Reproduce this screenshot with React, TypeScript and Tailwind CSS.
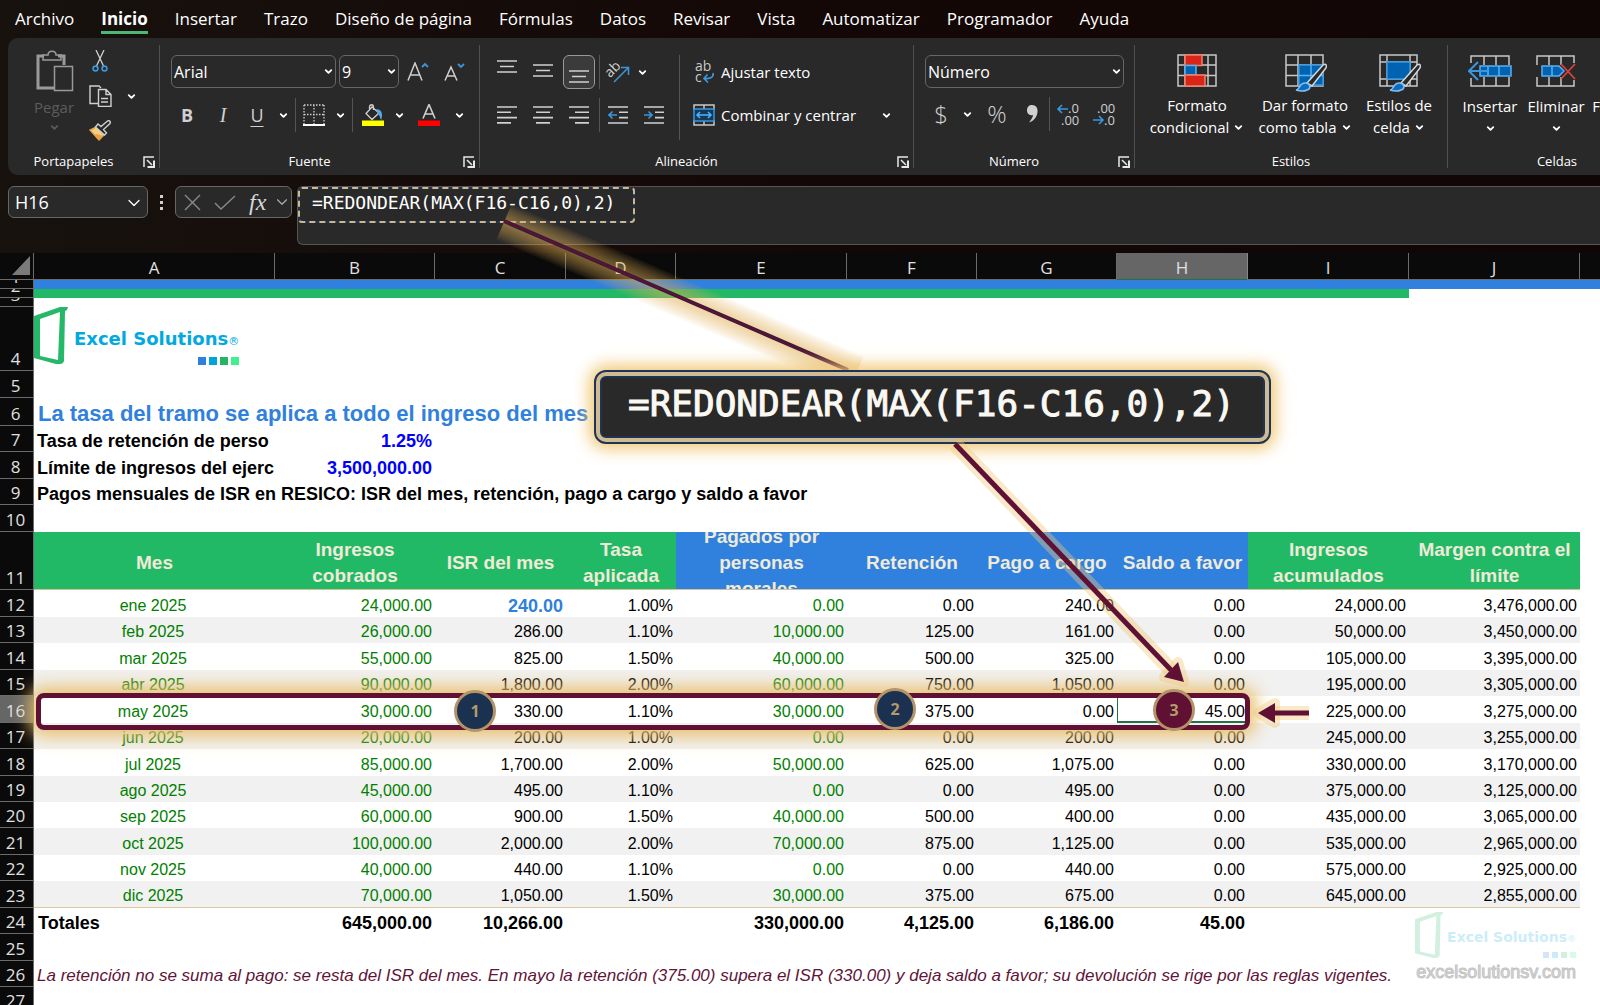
import type { ReactNode } from 'react';
import { ChevronDown } from 'lucide-react';
import clsx from 'clsx';

const tabs = [
  'Archivo',
  'Inicio',
  'Insertar',
  'Trazo',
  'Diseño de página',
  'Fórmulas',
  'Datos',
  'Revisar',
  'Vista',
  'Automatizar',
  'Programador',
  'Ayuda',
];

const columns = [
  { letter: 'A', width: 'w-[241px]' },
  { letter: 'B', width: 'w-[160px]' },
  { letter: 'C', width: 'w-[131px]' },
  { letter: 'D', width: 'w-[110px]' },
  { letter: 'E', width: 'w-[171px]' },
  { letter: 'F', width: 'w-[130px]' },
  { letter: 'G', width: 'w-[140px]' },
  { letter: 'H', width: 'w-[131px]' },
  { letter: 'I', width: 'w-[161px]' },
  { letter: 'J', width: 'w-[171px]' },
];

const headings = [
  { text: 'Mes', blue: false },
  { text: 'Ingresos cobrados', blue: false },
  { text: 'ISR del mes', blue: false },
  { text: 'Tasa aplicada', blue: false },
  { text: 'Pagados por personas morales', blue: true },
  { text: 'Retención', blue: true },
  { text: 'Pago a cargo', blue: true },
  { text: 'Saldo a favor', blue: true },
  { text: 'Ingresos acumulados', blue: false },
  { text: 'Margen contra el límite', blue: false },
];

const months = [
  { n: 12, h: 'h-[27px]', cells: ['ene 2025', '24,000.00', '240.00', '1.00%', '0.00', '0.00', '240.00', '0.00', '24,000.00', '3,476,000.00'] },
  { n: 13, h: 'h-[26px]', cells: ['feb 2025', '26,000.00', '286.00', '1.10%', '10,000.00', '125.00', '161.00', '0.00', '50,000.00', '3,450,000.00'] },
  { n: 14, h: 'h-[27px]', cells: ['mar 2025', '55,000.00', '825.00', '1.50%', '40,000.00', '500.00', '325.00', '0.00', '105,000.00', '3,395,000.00'] },
  { n: 15, h: 'h-[26px]', cells: ['abr 2025', '90,000.00', '1,800.00', '2.00%', '60,000.00', '750.00', '1,050.00', '0.00', '195,000.00', '3,305,000.00'] },
  { n: 16, h: 'h-[27px]', cells: ['may 2025', '30,000.00', '330.00', '1.10%', '30,000.00', '375.00', '0.00', '45.00', '225,000.00', '3,275,000.00'] },
  { n: 17, h: 'h-[26px]', cells: ['jun 2025', '20,000.00', '200.00', '1.00%', '0.00', '0.00', '200.00', '0.00', '245,000.00', '3,255,000.00'] },
  { n: 18, h: 'h-[27px]', cells: ['jul 2025', '85,000.00', '1,700.00', '2.00%', '50,000.00', '625.00', '1,075.00', '0.00', '330,000.00', '3,170,000.00'] },
  { n: 19, h: 'h-[26px]', cells: ['ago 2025', '45,000.00', '495.00', '1.10%', '0.00', '0.00', '495.00', '0.00', '375,000.00', '3,125,000.00'] },
  { n: 20, h: 'h-[26px]', cells: ['sep 2025', '60,000.00', '900.00', '1.50%', '40,000.00', '500.00', '400.00', '0.00', '435,000.00', '3,065,000.00'] },
  { n: 21, h: 'h-[27px]', cells: ['oct 2025', '100,000.00', '2,000.00', '2.00%', '70,000.00', '875.00', '1,125.00', '0.00', '535,000.00', '2,965,000.00'] },
  { n: 22, h: 'h-[26px]', cells: ['nov 2025', '40,000.00', '440.00', '1.10%', '0.00', '0.00', '440.00', '0.00', '575,000.00', '2,925,000.00'] },
  { n: 23, h: 'h-[27px]', cells: ['dic 2025', '70,000.00', '1,050.00', '1.50%', '30,000.00', '375.00', '675.00', '0.00', '645,000.00', '2,855,000.00'] },
];

const totals = ['645,000.00', '10,266.00', '', '330,000.00', '4,125.00', '6,186.00', '45.00'];

const FORMULA = '=REDONDEAR(MAX(F16-C16,0),2)';

/* ---------- small shared pieces ---------- */

const Caret = ({ className }: { className?: string }) => (
  <ChevronDown size={11} strokeWidth={4} className={clsx('shrink-0', className)} />
);

const CaretButton = ({ label }: { label: string }) => (
  <button aria-label={label} className="flex h-8 w-3 items-center justify-center">
    <Caret />
  </button>
);

const Tool = ({ label, className, children }: { label: string; className?: string; children: ReactNode }) => (
  <button aria-label={label} className={clsx('flex h-[34px] shrink-0 items-center justify-center text-[#d0d0d0]', className)}>
    {children}
  </button>
);

const Rule = ({ className }: { className?: string }) => (
  <div className={clsx('w-px shrink-0 bg-[#555]', className ?? 'h-[34px]')} />
);

const Launcher = () => (
  <svg width="12" height="12" viewBox="0 0 12 12" fill="none" stroke="#e8e8e8" strokeWidth="1.5">
    <path d="M1 11V1H11M4 4L9 9" />
    <path d="M11 4.5V11H4.5" strokeWidth="2" />
  </svg>
);

type GroupProps = { title: string; className?: string; launcher?: boolean; children: ReactNode };

const Group = ({ title, className, launcher, children }: GroupProps) => (
  <section className={clsx('flex shrink-0 flex-col pt-[17px]', className)}>
    <div className="h-[94px]">{children}</div>
    <div className="flex h-6 items-center px-1 pt-px">
      <span className={clsx('flex-1 text-center text-[13px]', launcher && 'pr-2')}>{title}</span>
      {launcher && (
        <button aria-label={`Opciones de ${title}`}>
          <Launcher />
        </button>
      )}
    </div>
  </section>
);

const GroupRule = () => <div className="my-[7px] w-px shrink-0 bg-[#505050]" />;

type DropProps = { label: string; value: string; className: string };

const Drop = ({ label, value, className }: DropProps) => (
  <div className={clsx('relative h-[33px]', className)}>
    <select
      aria-label={label}
      defaultValue={value}
      className="h-full w-full appearance-none rounded-md border border-[#666] bg-[#292929] pl-[2px] text-base text-white"
    >
      <option>{value}</option>
    </select>
    <Caret className="pointer-events-none absolute top-[11px] right-[2px]" />
  </div>
);

/* ---------- ribbon drawings ---------- */

const lineWidths = [20, 14, 20, 14];

const Lines = ({ align }: { align: 'left' | 'center' | 'right' }) => (
  <svg width="20" height="20" viewBox="0 0 20 20" stroke="currentColor" strokeWidth="1.6">
    {lineWidths.map((w, i) => {
      const x = align === 'left' ? 0 : align === 'right' ? 20 - w : (20 - w) / 2;
      return <path key={i} d={`M${x} ${2 + i * 5.3}h${w}`} />;
    })}
  </svg>
);

const VLines = ({ y }: { y: number }) => (
  <svg width="20" height="26" viewBox="0 0 20 26" stroke="currentColor" strokeWidth="1.6">
    <path d={`M0 ${y}h20M3 ${y + 5.5}h14M0 ${y + 11}h20`} />
  </svg>
);

const Indent = ({ out }: { out?: boolean }) => (
  <svg width="20" height="20" viewBox="0 0 20 20" fill="none" stroke="currentColor" strokeWidth="1.6">
    <path d="M0 2h20M11 7.3h9M11 12.6h9M0 18h20" />
    <path stroke="#3a96dd" d={out ? 'M9 10H1M4.5 6.5L1 10l3.5 3.5' : 'M0 10h8M4.5 6.5L8 10l-3.5 3.5'} />
  </svg>
);

const PasteIcon = () => (
  <svg width="40" height="42" viewBox="0 0 40 42" fill="none" stroke="#9a9a9a" strokeWidth="1.5">
    <path d="M10 6H4v32h16" strokeWidth="3" />
    <path d="M24 6h6v9" strokeWidth="3" />
    <path d="M9 10V5h5c0-5 8-5 8 0h5v5z" />
    <rect x="20.5" y="16.5" width="18" height="24" />
  </svg>
);

const CutIcon = () => (
  <svg width="16" height="22" viewBox="0 0 16 22" fill="none" stroke="#d0d0d0" strokeWidth="1.3">
    <path d="M4 0l7.500 16M12 0L4.500 16" />
    <circle cx="3.5" cy="18.5" r="2.4" stroke="#3a96dd" strokeWidth="1.6" />
    <circle cx="12.5" cy="18.5" r="2.4" stroke="#3a96dd" strokeWidth="1.6" />
  </svg>
);

const CopyIcon = () => (
  <svg width="23" height="22" viewBox="0 0 23 22" fill="none" stroke="#d0d0d0" strokeWidth="1.4">
    <path d="M9 18.500H1V1h9l2 2" />
    <path d="M9.500 4.500h7.500l5 5v12H9.500zM17 4.500v5h5M12 13.500h7M12 17h7" />
  </svg>
);

const BrushIcon = () => (
  <svg width="22" height="21" viewBox="0 0 22 21" fill="none" stroke="#d0d0d0" strokeWidth="1.4">
    <path d="M1 10l9 10 5-5-8-8z" fill="#f5d27a" stroke="#e0a050" />
    <path d="M5 15l5 5 4-4-6-2z" fill="#f0a040" stroke="none" />
    <path d="M6.500 7l9 8 2-2-3-3.500 6.500-6c1-2-1-3.500-2.500-2.500L12 6.500 9 4z" fill="#292929" />
  </svg>
);

const BordersIcon = () => (
  <svg width="22" height="22" viewBox="0 0 22 22" fill="none" stroke="#d0d0d0" strokeWidth="1.3">
    <path strokeDasharray="1.5 1.5" d="M1 1h20M1 1v19M21 1v19M11 1v19M1 10.500h20" />
    <path d="M0 21h22" strokeWidth="2" stroke="#fff" />
  </svg>
);

const FillIcon = () => (
  <svg width="22" height="22" viewBox="0 0 22 22" fill="none" stroke="#d0d0d0" strokeWidth="1.3">
    <path d="M10 3l7 6-7 6.500-6-6zM7.500 7V3c0-3 4-3 4 0v3" />
    <path d="M15 6c4 0 5 4 4 8-1-3-2-4-4-8z" fill="#5aa9e6" stroke="#5aa9e6" />
    <rect x="0" y="16.5" width="22" height="5.5" fill="#ff0" stroke="none" />
  </svg>
);

const FontColorIcon = () => (
  <svg width="22" height="22" viewBox="0 0 22 22" fill="none" stroke="#d0d0d0" strokeWidth="1.6">
    <path d="M5 14.500L11 0.500l6 14M7 10h8" />
    <rect x="0" y="16.5" width="22" height="5.5" fill="#f00" stroke="none" />
  </svg>
);

const FontSizeIcon = ({ up }: { up?: boolean }) => (
  <svg width="22" height="20" viewBox="0 0 22 20" fill="none" stroke="#d0d0d0" strokeWidth="1.5">
    {up ? <path d="M1 18.500L8 1l7 17.500M3.500 13h9" /> : <path d="M1 18.500L7 5l6 13.500M3.500 14h7" />}
    <path stroke="#3a96dd" strokeWidth="1.8" d={up ? 'M15 5l3-3 3 3' : 'M14 2l3 3 3-3'} />
  </svg>
);

const AngleIcon = () => (
  <svg width="24" height="24" viewBox="0 0 24 24" fill="none" stroke="#3a96dd" strokeWidth="1.5" className="overflow-visible">
    <path d="M8 22L22 8M15 7.500h7.500V15" />
    <text x="0" y="15" transform="rotate(-45 6 12)" fill="#d0d0d0" stroke="none" className="text-[14px]">
      ab
    </text>
  </svg>
);

const WrapIcon = () => (
  <svg width="22" height="24" viewBox="0 0 22 24" fill="none" stroke="#3a96dd" strokeWidth="1.7" className="overflow-visible">
    <text x="2" y="11" fill="#c8c8c8" stroke="none" className="text-[14px]">
      ab
    </text>
    <text x="2" y="22" fill="#c8c8c8" stroke="none" className="text-[14px]">
      c
    </text>
    <path d="M20 13c1 5-4 6-9 5.500M14.500 14.500L11 18.500l4 4" />
  </svg>
);

const MergeIcon = () => (
  <svg width="22" height="22" viewBox="0 0 22 22" fill="none" stroke="#c8c8c8" strokeWidth="1.5">
    <path d="M1 6V1h20v5M1 16v5h20v-5M11 1v5M11 16v5" />
    <rect x="1" y="5" width="20" height="12" fill="#123a5c" stroke="#3a96dd" />
    <path stroke="#5ab0f0" d="M4 11h14M7 8l-3 3 3 3M15 8l3 3-3 3" />
  </svg>
);

const DecimalIcon = ({ more }: { more?: boolean }) => (
  <svg width="24" height="24" viewBox="0 0 24 24" fill="none" stroke="#3a96dd" strokeWidth="1.6" className="overflow-visible">
    <text x={more ? 12 : 5} y="11" fill="#d0d0d0" stroke="none" className="text-[13px]">
      {more ? '.0' : '.00'}
    </text>
    <text x={more ? 5 : 12} y="23" fill="#d0d0d0" stroke="none" className="text-[13px]">
      {more ? '.00' : '.0'}
    </text>
    <path d={more ? 'M12 7H2M6 3L2 7l4 4' : 'M1 18h10M7 14l4 4-4 4'} />
  </svg>
);

const ConditionalIcon = () => (
  <svg width="40" height="34" viewBox="0 0 40 34" fill="none" stroke="#c8c8c8" strokeWidth="1.5">
    <path d="M1 1h38v31H1zM1 11h38M1 21.500h38M8 1v31M31 1v31" />
    <rect x="8" y="1" width="17" height="10.5" fill="#d92516" stroke="#f08070" />
    <rect x="8" y="11.5" width="11" height="9.5" fill="#0063b1" stroke="#5ab0f0" />
    <rect x="8" y="21" width="20" height="11" fill="#d92516" stroke="#f08070" />
  </svg>
);

const PaintBrush = () => (
  <>
    <path d="M22 29L38 11c3-2 4 0 3 3L27 32z" fill="#292929" stroke="#d8d8d8" />
    <path d="M11 36c4 0 3-8 10-7 5 1 5 6 1 7-4 2-8 1-11 0z" fill="#0f6cbd" stroke="#7cc0f5" />
  </>
);

const TableStyleIcon = () => (
  <svg width="40" height="38" viewBox="0 0 40 38" fill="none" stroke="#c8c8c8" strokeWidth="1.5" className="overflow-visible">
    <path d="M1 1h37v31H1zM1 11h37M1 21.500h37M13 1v31M26 1v31" />
    <path d="M14 11h24v20H14z" fill="#0063b1" stroke="#3a96dd" />
    <path d="M26 11v20M14 21.500h24" stroke="#5ab0f0" />
    <PaintBrush />
  </svg>
);

const CellStyleIcon = () => (
  <svg width="40" height="38" viewBox="0 0 40 38" fill="none" stroke="#c8c8c8" strokeWidth="1.5" className="overflow-visible">
    <path d="M1 1h37v31H1zM1 8h37M1 25h37M8 1v31M31 1v31" />
    <path d="M8 8h23v17H8z" fill="#0063b1" stroke="#3a96dd" />
    <PaintBrush />
  </svg>
);

const InsertIcon = () => (
  <svg width="44" height="32" viewBox="0 0 44 32" fill="none" stroke="#c8c8c8" strokeWidth="1.5">
    <path d="M3 8V1h38v9M3 23v8h38v-9M16 1v9M28 1v9M16 22v9M28 22v9" />
    <path d="M12 11h31v10H12zM20 11v10M31 11v10" fill="#0063b1" stroke="#5ab0f0" />
    <path d="M19 16H1M10 7L1 16l9 9" stroke="#3a96dd" strokeWidth="2" />
  </svg>
);

const DeleteIcon = () => (
  <svg width="44" height="32" viewBox="0 0 44 32" fill="none" stroke="#c8c8c8" strokeWidth="1.5">
    <path d="M3 10V1h37v7M3 22v9h37v-6M15 1v9M27 1v9M15 22v9M27 22v9" />
    <path d="M8 11h17l5 5-5 5H8zM18 11v10" fill="#0063b1" stroke="#5ab0f0" />
    <path d="M27 9l14 15M41 9L27 24" stroke="#e04040" strokeWidth="1.8" />
  </svg>
);

const FormatIcon = () => (
  <svg width="30" height="32" viewBox="0 0 30 32" fill="none" stroke="#c8c8c8" strokeWidth="1.5">
    <path d="M1 1h28v30H1zM1 11h28M1 21h28M15 1v30" />
  </svg>
);

const BigButton = ({ icon, lines, className }: { icon: ReactNode; lines: string[]; className: string }) => (
  <button className={clsx('flex shrink-0 flex-col items-center text-[15px] leading-[22px] whitespace-nowrap', className)}>
    <span className="flex h-10 items-start">{icon}</span>
    <span>{lines[0]}</span>
    <span className="flex h-[22px] items-center gap-1">
      {lines[1]}
      <Caret />
    </span>
  </button>
);

/* ---------- ribbon ---------- */

const Ribbon = () => (
  <div className="ml-2 flex h-[137px] overflow-hidden rounded-l-[10px] bg-[#292929]">
    <Group title="Portapapeles" className="w-[151px]" launcher>
      <div className="-mt-[5px] flex h-[99px] pl-[25px]">
        <button className="flex w-[42px] flex-col items-center text-[15px] text-[#5c5c5c]">
          <PasteIcon />
          <span className="mt-1 leading-[22px]">Pegar</span>
          <Caret className="mt-1" />
        </button>
        <div className="ml-3 flex w-[26px] flex-col items-center">
          <button aria-label="Cortar" className="flex h-[35px] items-start"><CutIcon /></button>
          <button aria-label="Copiar" className="flex h-[35px] items-start"><CopyIcon /></button>
          <button aria-label="Copiar formato"><BrushIcon /></button>
        </div>
        <div className="ml-3 pt-[30px]">
          <CaretButton label="Más opciones de copiar" />
        </div>
      </div>
    </Group>
    <GroupRule />

    <Group title="Fuente" className="w-[319px]" launcher>
      <div className="flex gap-[3px] pl-[11px]">
        <Drop label="Fuente" value="Arial" className="w-[165px]" />
        <Drop label="Tamaño" value="9" className="w-[60px]" />
        <Tool label="Aumentar tamaño" className="w-8"><FontSizeIcon up /></Tool>
        <Tool label="Disminuir tamaño" className="w-9"><FontSizeIcon /></Tool>
      </div>
      <div className="mt-[9px] flex items-center gap-1 pl-[11px]">
        <Tool label="Negrita" className="w-8"><b className="text-lg">B</b></Tool>
        <Tool label="Cursiva" className="w-8"><i className="font-['Liberation_Serif',serif] text-xl">I</i></Tool>
        <Tool label="Subrayado" className="w-7"><u className="text-lg underline-offset-4">U</u></Tool>
        <button aria-label="Más subrayados" className="flex w-4 justify-center"><Caret /></button>
        <Rule />
        <Tool label="Bordes" className="w-7"><BordersIcon /></Tool>
        <button aria-label="Más bordes" className="flex w-4 justify-center"><Caret /></button>
        <Rule />
        <Tool label="Color de relleno" className="w-8"><FillIcon /></Tool>
        <CaretButton label="Más colores de relleno" />
        <Tool label="Color de fuente" className="w-10"><FontColorIcon /></Tool>
        <CaretButton label="Más colores de fuente" />
      </div>
    </Group>
    <GroupRule />

    <Group title="Alineación" className="w-[433px]" launcher>
      <div className="flex gap-1.5 pl-[11px]">
        <div className="flex w-[182px] flex-col gap-[9px]">
          <div className="flex items-center gap-1">
            <Tool label="Alinear arriba" className="w-8"><VLines y={2} /></Tool>
            <Tool label="Alinear al medio" className="w-8"><VLines y={6} /></Tool>
            <Tool label="Alinear abajo" className="w-8 rounded-md border border-[#999] bg-[#3b3b3b]"><VLines y={12} /></Tool>
            <Rule />
            <Tool label="Orientación" className="w-7"><AngleIcon /></Tool>
            <CaretButton label="Más orientaciones" />
          </div>
          <div className="flex items-center gap-1">
            <Tool label="Alinear a la izquierda" className="w-8"><Lines align="left" /></Tool>
            <Tool label="Centrar" className="w-8"><Lines align="center" /></Tool>
            <Tool label="Alinear a la derecha" className="w-8"><Lines align="right" /></Tool>
            <Rule />
            <Tool label="Disminuir sangría" className="w-7"><Indent out /></Tool>
            <Tool label="Aumentar sangría" className="w-9"><Indent /></Tool>
          </div>
        </div>
        <Rule className="h-[85px]" />
        <div className="flex flex-1 flex-col gap-[9px] pl-[7px]">
          <button className="flex h-[34px] items-center gap-1.5 text-[15px]"><WrapIcon />Ajustar texto</button>
          <div className="flex items-center">
            <button className="flex h-[34px] items-center gap-1.5 text-[15px]"><MergeIcon />Combinar y centrar</button>
            <span className="ml-auto pr-[21px]"><CaretButton label="Más opciones de combinar" /></span>
          </div>
        </div>
      </div>
    </Group>
    <GroupRule />

    <Group title="Número" className="w-[220px]" launcher>
      <div className="pr-[10px] pl-[11px]">
        <Drop label="Formato de número" value="Número" className="w-full" />
      </div>
      <div className="mt-[9px] flex items-center pl-[11px]">
        <Tool label="Moneda" className="w-8 text-2xl font-light">$</Tool>
        <button aria-label="Más monedas" className="flex w-5 justify-center"><Caret /></button>
        <Tool label="Porcentaje" className="w-10 text-2xl font-light">%</Tool>
        <Tool label="Millares" className="w-8">
          <svg width="12" height="20" viewBox="0 0 12 20" fill="#d0d0d0">
            <path d="M5 1c4 0 6 3 5.500 7C10 13 7 17 2 18.500c2-3 4-5 4-7.500C2 12 0 9.500 0 6.500 0 3 2 1 5 1z" />
          </svg>
        </Tool>
        <Rule />
        <Tool label="Aumentar decimales" className="w-9"><DecimalIcon more /></Tool>
        <Tool label="Disminuir decimales" className="w-9"><DecimalIcon /></Tool>
      </div>
    </Group>
    <GroupRule />

    <Group title="Estilos" className="w-[312px]">
      <div className="-mt-px flex gap-1 pl-[10px]">
        <BigButton icon={<ConditionalIcon />} lines={['Formato', 'condicional']} className="w-[104px]" />
        <BigButton icon={<TableStyleIcon />} lines={['Dar formato', 'como tabla']} className="w-[104px]" />
        <BigButton icon={<CellStyleIcon />} lines={['Estilos de', 'celda']} className="w-[76px]" />
      </div>
    </Group>
    <GroupRule />

    <Group title="Celdas" className="w-[218px]">
      <div className="flex gap-1.5 pl-3">
        <BigButton icon={<InsertIcon />} lines={['Insertar', '']} className="w-[60px]" />
        <BigButton icon={<DeleteIcon />} lines={['Eliminar', '']} className="w-[60px]" />
        <BigButton icon={<FormatIcon />} lines={['Formato', '']} className="w-[60px]" />
      </div>
    </Group>
  </div>
);

/* ---------- formula bar ---------- */

const FormulaBar = () => (
  <div className="flex items-start pt-[11px] pb-2 pl-2">
    <div className="relative h-8 w-[140px]">
      <input
        aria-label="Cuadro de nombres"
        defaultValue="H16"
        className="h-full w-full rounded-md border border-[#666] bg-[#292929] pl-1.5 text-lg text-white"
      />
      <ChevronDown size={20} strokeWidth={1.5} className="pointer-events-none absolute top-[7px] right-1" />
    </div>
    <div className="flex h-8 w-[27px] flex-col items-center justify-center gap-[3px]">
      <span className="size-[3px] bg-[#d0d0d0]" />
      <span className="size-[3px] bg-[#d0d0d0]" />
      <span className="size-[3px] bg-[#d0d0d0]" />
    </div>
    <div className="flex h-8 w-[117px] items-center rounded-md border border-[#666] bg-[#292929] pl-2">
      <button aria-label="Cancelar">
        <svg width="17" height="17" viewBox="0 0 17 17" stroke="#8a8a8a" strokeWidth="1.4"><path d="M1 1l15 15M16 1L1 16" /></svg>
      </button>
      <button aria-label="Introducir" className="ml-3">
        <svg width="24" height="17" viewBox="0 0 24 17" fill="none" stroke="#8a8a8a" strokeWidth="1.4"><path d="M2 9l6 6L22 2" /></svg>
      </button>
      <button className="ml-3 font-['Liberation_Serif',serif] text-2xl leading-6 text-[#d8d8d8] italic">
        fx
      </button>
      <ChevronDown size={18} strokeWidth={1.5} className="ml-auto text-[#b0b0b0]" />
    </div>
    <div className="ml-[5px] h-[59px] flex-1 rounded-l-md border border-r-0 border-[#555] bg-[#292929]">
      <div className="relative h-9 w-[337px] rounded border-2 border-[#1f3452]">
        <div className="absolute -inset-[2px] rounded border-2 border-dashed border-[#cdb78f]" />
        <input
          aria-label="Barra de fórmulas"
          defaultValue={FORMULA}
          className="relative h-7 w-full bg-transparent pl-3 font-['DejaVu_Sans_Mono',monospace] text-lg text-white"
        />
      </div>
    </div>
  </div>
);

/* ---------- sheet ---------- */

const RowHead = ({ n, active }: { n: number; active?: boolean }) => (
  <th
    scope="row"
    className={clsx(
      "border-r border-b border-[#6b6b6b] p-0 pr-0.5 align-bottom font-['Open_Sans',sans-serif] text-[17px] leading-[22px] font-normal text-[#e0e0e0]",
      active ? 'bg-[#666]' : 'bg-[#0a0a0a]',
    )}
  >
    {n}
  </th>
);

// rows 1-3 are almost closed, only the foot of each number is left
const ThinRowHead = ({ n }: { n: number }) => (
  <th scope="row" className="border-r border-b border-[#6b6b6b] bg-[#0a0a0a] p-0 pr-0.5 font-['Open_Sans',sans-serif] text-[17px] font-normal">
    <div className="h-2 overflow-hidden text-[#e0e0e0]">
      <div className="-mt-[14px] leading-[22px]">{n}</div>
    </div>
  </th>
);

const Logo = ({ small }: { small?: boolean }) => (
  <div className={clsx('flex items-start', small ? 'gap-1' : 'gap-1.5')}>
    <svg className={small ? 'h-[46px] w-7' : 'h-[57px] w-[34px]'} viewBox="0 0 34 57" fill="none" preserveAspectRatio="none">
      <path
        fillRule="evenodd"
        fill="#24b868"
        d="M0 9L26 0h8l-1 3-2 1-1 50q-1 3-4 3h-4L0 51zM6 12v37l18 4 2-48z"
      />
    </svg>
    <div className={clsx("font-['DejaVu_Sans',Verdana,sans-serif] font-bold text-[#00a9e0]", small ? 'pt-4' : 'pt-5')}>
      <div className={clsx('whitespace-nowrap', small ? 'text-[14px] leading-[18px]' : 'text-lg leading-6')}>
        Excel Solutions
        <span className={clsx('font-normal', small ? 'text-[9px]' : 'text-[11px]')}>®</span>
      </div>
      <div className={clsx('flex justify-end gap-[3px]', small ? 'mt-1' : 'mt-[3px]')}>
        <span className={clsx('bg-[#2f80de]', small ? 'size-1.5' : 'size-2')} />
        <span className={clsx('bg-[#00a3da]', small ? 'size-1.5' : 'size-2')} />
        <span className={clsx('bg-[#24b563]', small ? 'size-1.5' : 'size-2')} />
        <span className={clsx('bg-[#41ef8e]', small ? 'size-1.5' : 'size-2')} />
      </div>
    </div>
  </div>
);

const cellColor = (row: number, col: number) => {
  if (row === 12 && col === 2) return 'text-lg font-bold text-[#3080dd]';
  if (col === 0 || col === 1 || col === 4) return 'text-[#008000]';
  return 'text-black';
};

const Sheet = () => (
  <table className="w-full table-fixed border-separate border-spacing-0 bg-white font-['Liberation_Sans',Arial,sans-serif] text-base leading-[22px] text-black">
    <colgroup>
      <col className="w-[34px]" />
      {columns.map((c) => (
        <col key={c.letter} className={c.width} />
      ))}
      <col />
    </colgroup>
    <thead>
      <tr className="h-[27px] bg-[#0a0a0a] font-['Open_Sans',sans-serif] text-[17px] text-[#e0e0e0]">
        <th className="border-r border-b border-[#6b6b6b] p-0">
          <svg width="18" height="20" viewBox="0 0 18 20" className="ml-auto mr-[3px]"><path d="M18 0v19H0z" fill="#7a7a7a" /></svg>
        </th>
        {columns.map((c) => (
          <th
            key={c.letter}
            scope="col"
            className={clsx(
              'border-r border-b p-0 align-bottom font-normal',
              c.letter === 'H' ? 'border-r-[#888] border-b-[#217346] bg-[#666]' : 'border-[#6b6b6b]',
            )}
          >
            {c.letter}
          </th>
        ))}
        <th className="border-b border-[#6b6b6b] p-0" />
      </tr>
    </thead>
    <tbody>
      <tr>
        <ThinRowHead n={1} />
        <td colSpan={11} className="bg-[#3080de] p-0" />
      </tr>
      <tr>
        <ThinRowHead n={2} />
        <td colSpan={9} className="bg-[#22b966] p-0" />
        <td colSpan={2} />
      </tr>
      <tr>
        <ThinRowHead n={3} />
        <td colSpan={11} />
      </tr>
      <tr className="h-16">
        <RowHead n={4} />
        <td colSpan={11} className="p-0 align-top">
          <Logo />
        </td>
      </tr>
      <tr className="h-[27px]">
        <RowHead n={5} />
        <td colSpan={11} />
      </tr>
      <tr className="h-[28px]">
        <RowHead n={6} />
        <td colSpan={11} className="p-0 pl-1 align-bottom text-[22px] leading-6 font-bold text-[#3080dd]">
          La tasa del tramo se aplica a todo el ingreso del mes
        </td>
      </tr>
      <tr className="h-[26px] text-lg leading-[22px] font-bold">
        <RowHead n={7} />
        <td className="overflow-hidden p-0 pl-[3px] align-bottom whitespace-nowrap">Tasa de retención de perso</td>
        <td className="p-0 pr-[3px] text-right align-bottom text-[#00f]">1.25%</td>
        <td colSpan={9} />
      </tr>
      <tr className="h-[27px] text-lg leading-[22px] font-bold">
        <RowHead n={8} />
        <td className="overflow-hidden p-0 pl-[3px] align-bottom whitespace-nowrap">Límite de ingresos del ejerc</td>
        <td className="p-0 pr-[3px] text-right align-bottom text-[#00f]">3,500,000.00</td>
        <td colSpan={9} />
      </tr>
      <tr className="h-[26px] text-lg leading-[22px] font-bold">
        <RowHead n={9} />
        <td colSpan={11} className="p-0 pl-[3px] align-bottom">
          Pagos mensuales de ISR en RESICO: ISR del mes, retención, pago a cargo y saldo a favor
        </td>
      </tr>
      <tr className="h-[27px]">
        <RowHead n={10} />
        <td colSpan={11} />
      </tr>
      <tr>
        <RowHead n={11} />
        {headings.map((h) => (
          <th
            key={h.text}
            scope="col"
            className={clsx('border-b border-[#d9c08f] p-0 text-[19px] leading-[26px] text-[#f0ead8]', h.blue ? 'bg-[#3080de]' : 'bg-[#22b966]')}
          >
            <div className="flex h-[57px] items-center justify-center overflow-hidden pt-1">
              <span className={h.text === 'Pagados por personas morales' ? 'px-5' : 'px-px'}>{h.text}</span>
            </div>
          </th>
        ))}
        <td />
      </tr>
      {months.map((m) => (
        <tr key={m.n} className={m.h}>
          <RowHead n={m.n} active={m.n === 16} />
          {m.cells.map((value, col) => (
            <td
              key={col}
              className={clsx(
                'p-0 pr-[3px] align-bottom leading-[22px]',
                col === 0 ? 'text-center' : 'text-right',
                cellColor(m.n, col),
                m.n % 2 === 1 && 'bg-[#f1f1f1]',
                m.n === 23 && 'border-b border-b-[#dcc9a0]',
                m.n === 16 && col === 7 && 'shadow-[inset_1px_-2px_0_0_#217346]',
              )}
            >
              {value}
            </td>
          ))}
          <td />
        </tr>
      ))}
      <tr className="h-[26px] text-lg leading-[22px] font-bold">
        <RowHead n={24} />
        <td className="p-0 pl-1 align-bottom">Totales</td>
        {totals.map((t, i) => (
          <td key={i} className="p-0 pr-[3px] text-right align-bottom">{t}</td>
        ))}
        <td colSpan={3} />
      </tr>
      <tr className="h-[27px]">
        <RowHead n={25} />
        <td colSpan={11} />
      </tr>
      <tr className="h-[26px]">
        <RowHead n={26} />
        <td colSpan={11} className="p-0 pl-[3px] align-bottom text-[17px] text-[#5f1438] italic">
          La retención no se suma al pago: se resta del ISR del mes. En mayo la retención (375.00) supera el ISR (330.00) y deja saldo a favor; su devolución se rige por las reglas vigentes.
        </td>
      </tr>
      <tr className="h-[26px]">
        <RowHead n={27} />
        <td colSpan={11} />
      </tr>
    </tbody>
  </table>
);

/* ---------- annotations drawn over the sheet ---------- */

const Badge = ({ n, className }: { n: number; className: string }) => (
  <div
    className={clsx(
      'absolute flex size-[42px] items-center justify-center rounded-full border-[3px] border-[#b39368] text-base font-bold text-[#b39a6c]',
      className,
    )}
  >
    {n}
  </div>
);

const Annotations = () => (
  <div className="pointer-events-none absolute inset-0">
    <svg className="absolute inset-0 h-full w-full" fill="none">
      {[38, 34, 30, 26, 22, 18, 14, 10, 6].map((w) => (
        <path key={w} d="M504 222L856 374" stroke="#e9b75a" strokeOpacity="0.08" strokeWidth={w} />
      ))}
      <path d="M504 221L848 370" stroke="#1f2440" strokeWidth="4" />
      <path d="M504 221L848 370" stroke="#5f1033" strokeWidth="2.5" />
    </svg>

    <div className="absolute top-[693px] left-[36px] h-[37px] w-[1214px] rounded-lg border-[5px] border-[#5f1033] shadow-[0_0_18px_6px_#e8bf6c]" />

    <div className="absolute top-[370px] left-[594px] rounded-xl border-2 border-[#1f3452] bg-[#cfba93] p-1 shadow-[0_0_16px_5px_#f0c878]">
      <div className="flex h-[62px] rounded-md border-2 border-[#1f3452] bg-[#292929] pt-1.5 pr-7 pl-[26px] font-['DejaVu_Sans_Mono',monospace] text-4xl text-[#faf8f2] [-webkit-text-stroke:1px_#faf8f2]">
        {FORMULA}
      </div>
    </div>

    <svg className="absolute inset-0 h-full w-full" fill="none">
      <g stroke="#f0c878" strokeOpacity="0.4" strokeLinejoin="round">
        <path d="M955 444L1171 670" strokeWidth="15" />
        <path d="M1184 682L1178 662 1164 677z" strokeWidth="10" />
        <path d="M1309 713H1275" strokeWidth="14" />
        <path d="M1258 713L1275 703V723z" strokeWidth="10" />
      </g>
      <path d="M955 444L1171 670" stroke="#5f1033" strokeWidth="5" />
      <path d="M1184 682L1178 662 1164 677z" fill="#5f1033" />
      <path d="M1309 713H1274" stroke="#5f1033" strokeWidth="5" />
      <path d="M1258 713L1275 703V723z" fill="#5f1033" />
    </svg>

    <Badge n={1} className="top-[690px] left-[454px] bg-[#1b3150]" />
    <Badge n={2} className="top-[688px] left-[874px] bg-[#1b3150]" />
    <Badge n={3} className="top-[689px] left-[1153px] bg-[#5f1033]" />

    <div className="absolute top-[912px] right-6 flex flex-col items-end">
      <div className="opacity-20">
        <Logo small />
      </div>
      <div className="mt-1 font-['Liberation_Sans',Arial,sans-serif] text-lg leading-5 text-[#dedede] [-webkit-text-stroke:1px_#c4c4c4]">
        excelsolutionsv.com
      </div>
    </div>
  </div>
);

const App = () => (
  <div className="relative h-screen overflow-hidden bg-[#0a0a0a] font-['Open_Sans','Noto_Sans',sans-serif] text-white">
    <header className="bg-linear-to-r from-[#17120e] via-[#140806] to-[#100605]">
      <nav className="flex h-[38px] items-center gap-[27px] pt-0.5 pl-[15px] text-[17px] whitespace-nowrap">
        {tabs.map((tab) => (
          <a
            key={tab}
            href="#"
            className={clsx('border-b-[3px] leading-6', tab === 'Inicio' ? 'border-[#4cb878] font-bold' : 'border-transparent')}
          >
            {tab}
          </a>
        ))}
      </nav>
      <Ribbon />
      <FormulaBar />
    </header>
    <Sheet />
    <Annotations />
  </div>
);

export default App;
